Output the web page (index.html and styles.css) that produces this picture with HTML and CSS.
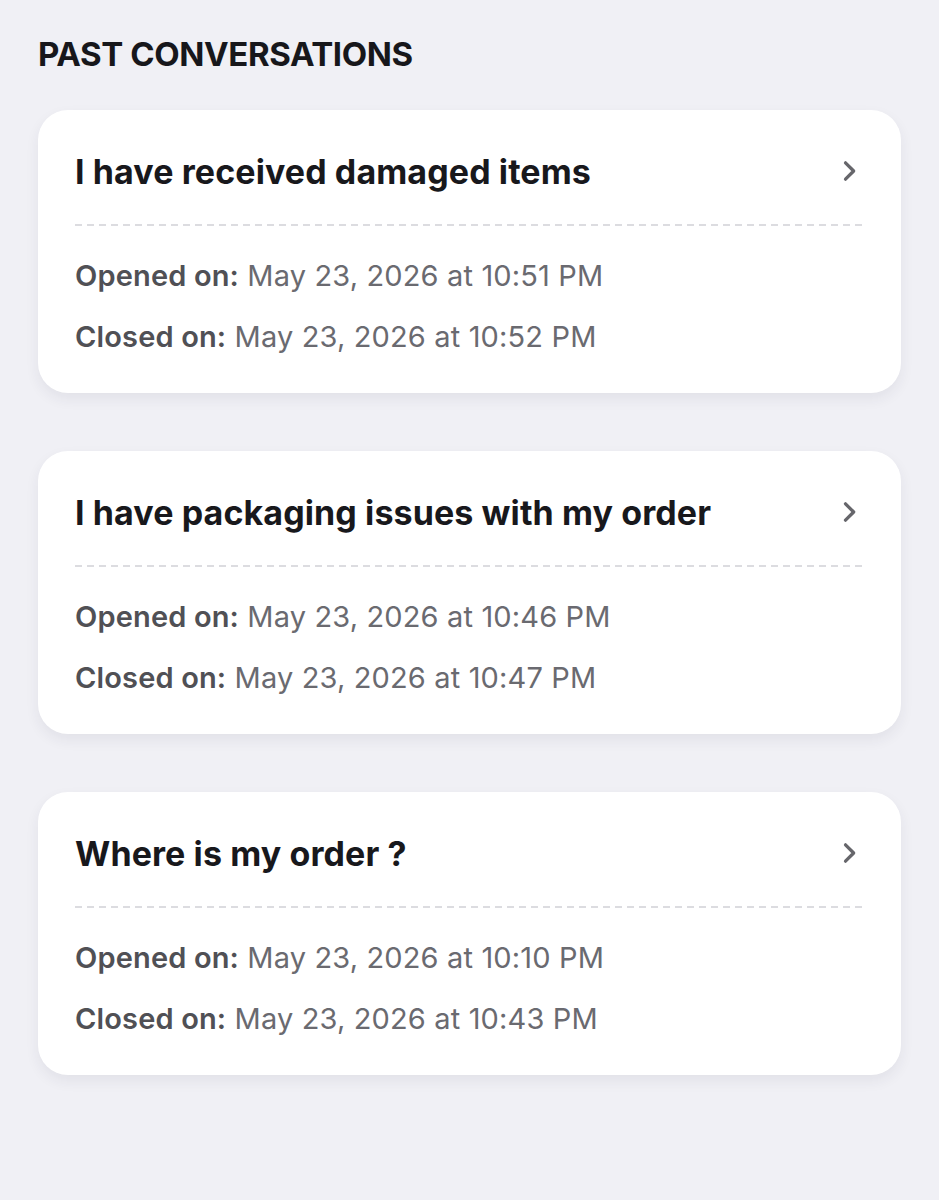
FILE: index.html
```html
<!DOCTYPE html>
<html lang="en">
<head>
<meta charset="utf-8">
<title>Past conversations</title>
<link rel="stylesheet" href="styles.css">
</head>
<body>
<main class="page">
  <h1 class="section-title">PAST CONVERSATIONS</h1>
  <ul class="conv-list">
    <li class="conv-card">
      <div class="conv-head">
        <span class="conv-title">I have received damaged items</span>
        <svg class="chev" viewBox="0 0 24 24" aria-hidden="true"><path d="M9 5l7 7-7 7"/></svg>
      </div>
      <div class="conv-divider"></div>
      <p class="conv-row"><span class="lbl">Opened on:</span> <span class="val">May 23, 2026 at 10:51 PM</span></p>
      <p class="conv-row"><span class="lbl">Closed on:</span> <span class="val">May 23, 2026 at 10:52 PM</span></p>
    </li>
    <li class="conv-card">
      <div class="conv-head">
        <span class="conv-title">I have packaging issues with my order</span>
        <svg class="chev" viewBox="0 0 24 24" aria-hidden="true"><path d="M9 5l7 7-7 7"/></svg>
      </div>
      <div class="conv-divider"></div>
      <p class="conv-row"><span class="lbl">Opened on:</span> <span class="val">May 23, 2026 at 10:46 PM</span></p>
      <p class="conv-row"><span class="lbl">Closed on:</span> <span class="val">May 23, 2026 at 10:47 PM</span></p>
    </li>
    <li class="conv-card">
      <div class="conv-head">
        <span class="conv-title">Where is my order ?</span>
        <svg class="chev" viewBox="0 0 24 24" aria-hidden="true"><path d="M9 5l7 7-7 7"/></svg>
      </div>
      <div class="conv-divider"></div>
      <p class="conv-row"><span class="lbl">Opened on:</span> <span class="val">May 23, 2026 at 10:10 PM</span></p>
      <p class="conv-row"><span class="lbl">Closed on:</span> <span class="val">May 23, 2026 at 10:43 PM</span></p>
    </li>
  </ul>
</main>
</body>
</html>
```
FILE: styles.css
```css
* { box-sizing: border-box; }
html, body { margin: 0; padding: 0; }
body {
  background: #f0f0f5;
  font-family: Inter, "Noto Sans", sans-serif;
  color: #18181c;
  min-height: 1200px;
}
.page {
  padding: 36px 38px 0 38px;
}
.section-title {
  margin: 0;
  font-size: 33px;
  font-weight: 700;
  letter-spacing: -0.4px;
  line-height: 36px;
  color: #17171b;
}
.conv-list {
  list-style: none;
  margin: 38px 0 0 0;
  padding: 0;
  display: flex;
  flex-direction: column;
  gap: 58px;
}
.conv-card {
  background: #ffffff;
  border-radius: 30px;
  box-shadow: 0 6px 14px rgba(40, 40, 70, 0.07);
  padding: 39px 37px 36px 37px;
  height: 283px;
}
.conv-head {
  display: flex;
  align-items: center;
  justify-content: space-between;
  height: 44px;
}
.conv-title {
  font-size: 34px;
  font-weight: 700;
  letter-spacing: 0.1px;
  color: #18181c;
}
.chev {
  width: 28px;
  height: 28px;
  margin-right: 1px;
  fill: none;
  stroke: #66666b;
  stroke-width: 2.8;
  stroke-linecap: round;
  stroke-linejoin: round;
}
.conv-divider {
  margin-top: 31px;
  height: 2px;
  background-image: linear-gradient(to right, #dcdce0 0 7px, transparent 7px 100%);
  background-size: 12px 2px;
  background-repeat: repeat-x;
}
.conv-row {
  margin: 0;
  font-size: 29px;
  letter-spacing: 0.15px;
  line-height: 61px;
}
.conv-row:first-of-type { margin-top: 19px; }
.lbl {
  font-weight: 600;
  color: #505055;
}
.val {
  font-weight: 400;
  color: #6a6a70;
}
```
